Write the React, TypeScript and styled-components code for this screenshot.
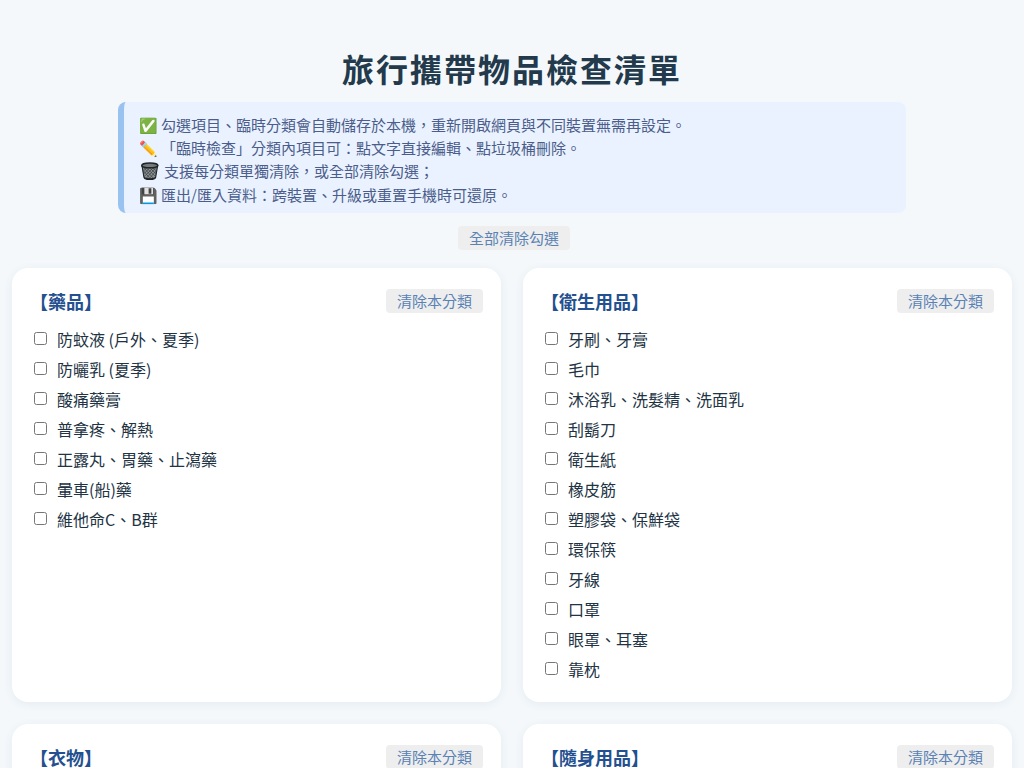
import React, { useState } from "react";
import styled, { createGlobalStyle } from "styled-components";

const GlobalStyle = createGlobalStyle`
  * { box-sizing: border-box; }
  body {
    margin: 0;
    background: #f4f8fb;
    color: #223344;
    font-family: "Noto Sans CJK TC", "Noto Color Emoji", sans-serif;
    font-size: 16px;
  }
`;

const Page = styled.main`
  padding: 44px 12px 22px;
`;

const Title = styled.h1`
  margin: 0 0 10px;
  text-align: center;
  font-size: 32px;
  line-height: 48px;
  letter-spacing: 2px;
  color: #223a4c;
`;

const Notice = styled.section`
  max-width: 788px;
  margin: 0 auto;
  padding: 11px 15px 7px;
  border-left: 6px solid #9ac2f0;
  border-radius: 8px;
  background: #eaf2ff;
  color: #4b5d8a;
  font-size: 15px;
  line-height: 23px;
`;

const NoticeLine = styled.p`
  margin: 0;
`;

const BinLine = styled(NoticeLine)`
  display: flex;
  align-items: center;
  gap: 4px;
  line-height: 24px;
`;

const BinSvg = styled.svg`
  width: 21px;
  height: 18px;
`;

const Toolbar = styled.div`
  display: flex;
  justify-content: center;
  padding: 13px 0 18px 4px;
`;

const ClearButton = styled.button`
  height: 24px;
  padding: 0 11px;
  border: 0;
  border-radius: 4px;
  background: #eeeeee;
  color: #5a82b4;
  font-family: inherit;
  font-size: 15px;
  line-height: 24px;
  cursor: pointer;
`;

const Grid = styled.div`
  display: grid;
  grid-template-columns: repeat(2, minmax(0, 1fr));
  gap: 22px;
`;

const Card = styled.section`
  padding: 18px;
  border-radius: 16px;
  background: #ffffff;
  box-shadow: 0 2px 10px rgba(34, 68, 102, 0.07);
`;

const CardHeader = styled.header`
  display: flex;
  align-items: center;
  justify-content: space-between;
  height: 30px;
  margin-bottom: 8px;
`;

const CardTitle = styled.h2`
  margin: 0;
  font-size: 18px;
  line-height: 30px;
  color: #24508f;
`;

const List = styled.ul`
  margin: 0;
  padding: 0;
  list-style: none;
`;

const Item = styled.label`
  display: flex;
  align-items: center;
  height: 30px;
`;

const Check = styled.input`
  width: 13px;
  height: 13px;
  margin: 0 10px 2px 4px;
`;

const categories = [
  {
    name: "藥品",
    items: ["防蚊液 (戶外、夏季)", "防曬乳 (夏季)", "酸痛藥膏", "普拿疼、解熱", "正露丸、胃藥、止瀉藥", "暈車(船)藥", "維他命C、B群"],
  },
  {
    name: "衛生用品",
    items: ["牙刷、牙膏", "毛巾", "沐浴乳、洗髮精、洗面乳", "刮鬍刀", "衛生紙", "橡皮筋", "塑膠袋、保鮮袋", "環保筷", "牙線", "口罩", "眼罩、耳塞", "靠枕"],
  },
  { name: "衣物", items: ["外套", "上衣", "褲子", "襪子"] },
  { name: "隨身用品", items: ["手機", "錢包", "鑰匙", "雨傘"] },
];

// Dark wire-mesh waste basket with a light rim opening.
function Bin() {
  return (
    <BinSvg viewBox="0 0 21 18" aria-hidden="true">
      <path d="M3 3.5 L5 15.5 Q5.3 17.6 10.8 17.6 Q16.3 17.6 16.6 15.5 L18.6 3.5 Z" fill="#8b9092" stroke="#202426" strokeWidth="1.2" />
      <path
        d="M5 6 L15 17 M7.5 6 L16.5 14.5 M10.8 6 L17.3 12 M14 6 L18 9.5 M4.2 8.5 L11.5 17 M16.6 6 L6.6 17 M14 6 L5.3 14.5 M10.8 6 L4.6 12 M7.5 6 L4 9.5 M17.4 8.5 L10 17"
        stroke="#3a3f41"
        strokeWidth="0.7"
        fill="none"
      />
      <path d="M5 15 Q10.8 17.4 16.6 15 L16.2 16.4 Q10.8 18.6 5.4 16.4 Z" fill="#202426" />
      <ellipse cx="10.8" cy="3.4" rx="8" ry="2.4" fill="#747a7c" stroke="#202426" strokeWidth="1.5" />
    </BinSvg>
  );
}

export default function App() {
  const [checked, setChecked] = useState<Record<string, boolean>>({});

  const clearCategory = (name: string) =>
    setChecked((prev) =>
      Object.fromEntries(Object.entries(prev).filter(([key]) => !key.startsWith(name + "/")))
    );

  return (
    <>
      <GlobalStyle />
      <Page lang="zh-Hant">
        <Title>旅行攜帶物品檢查清單</Title>
        <Notice>
          <NoticeLine>✅ 勾選項目、臨時分類會自動儲存於本機，重新開啟網頁與不同裝置無需再設定。</NoticeLine>
          <NoticeLine>✏️ 「臨時檢查」分類內項目可：點文字直接編輯、點垃圾桶刪除。</NoticeLine>
          <BinLine>
            <Bin />
            支援每分類單獨清除，或全部清除勾選；
          </BinLine>
          <NoticeLine>💾 匯出/匯入資料：跨裝置、升級或重置手機時可還原。</NoticeLine>
        </Notice>
        <Toolbar>
          <ClearButton type="button" onClick={() => setChecked({})}>全部清除勾選</ClearButton>
        </Toolbar>
        <Grid>
          {categories.map(({ name, items }) => (
            <Card key={name}>
              <CardHeader>
                <CardTitle>【{name}】</CardTitle>
                <ClearButton type="button" onClick={() => clearCategory(name)}>清除本分類</ClearButton>
              </CardHeader>
              <List>
                {items.map((item) => {
                  const key = `${name}/${item}`;
                  return (
                    <li key={item}>
                      <Item>
                        <Check
                          type="checkbox"
                          checked={!!checked[key]}
                          onChange={(e) => setChecked({ ...checked, [key]: e.target.checked })}
                        />
                        {item}
                      </Item>
                    </li>
                  );
                })}
              </List>
            </Card>
          ))}
        </Grid>
      </Page>
    </>
  );
}
